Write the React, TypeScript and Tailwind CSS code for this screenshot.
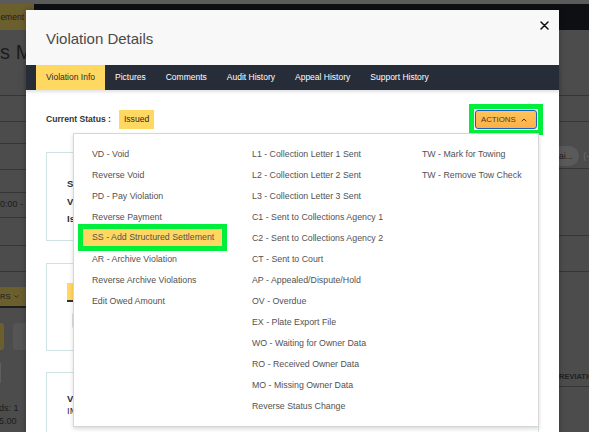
import { ChevronDown, ChevronUp } from 'lucide-react';

const tabs = ['Violation Info', 'Pictures', 'Comments', 'Audit History', 'Appeal History', 'Support History'];

const col1 = [
  'VD - Void',
  'Reverse Void',
  'PD - Pay Violation',
  'Reverse Payment',
  'SS - Add Structured Settlement',
  'AR - Archive Violation',
  'Reverse Archive Violations',
  'Edit Owed Amount',
];

const col2 = [
  'L1 - Collection Letter 1 Sent',
  'L2 - Collection Letter 2 Sent',
  'L3 - Collection Letter 3 Sent',
  'C1 - Sent to Collections Agency 1',
  'C2 - Sent to Collections Agency 2',
  'CT - Sent to Court',
  'AP - Appealed/Dispute/Hold',
  'OV - Overdue',
  'EX - Plate Export File',
  'WO - Waiting for Owner Data',
  'RO - Received Owner Data',
  'MO - Missing Owner Data',
  'Reverse Status Change',
];

const col3 = ['TW - Mark for Towing', 'TW - Remove Tow Check'];

function MenuColumn({ items, highlight }: { items: string[]; highlight?: string }) {
  return (
    <div className="flex flex-col">
      {items.map((item) =>
        item === highlight ? (
          <div key={item} className="h-[21px] flex items-center">
            <div className="w-[139px] h-[17px] -mt-[2px] pl-[9px] flex items-center bg-[#ffd862] outline-[5px] outline-solid outline-[#00ee3c] whitespace-nowrap">
              {item}
            </div>
          </div>
        ) : (
          <div key={item} className="h-[21px] flex items-center px-[9px] whitespace-nowrap">
            {item}
          </div>
        )
      )}
    </div>
  );
}

function Background() {
  return (
    <div className="flex flex-col w-full h-full text-[#1c1c1c]">
      <div className="h-[4px] bg-[#5b5b5b]" />
      <div className="h-[26px] flex">
        <div className="w-[34px] bg-[#6b5f2e] flex items-center justify-end pr-[10px] text-[8.5px] whitespace-nowrap overflow-hidden">
          ement
        </div>
        <div className="flex-1 bg-[#0e0f12]" />
      </div>
      <div className="flex flex-1">
        {/* left strip */}
        <div className="w-[26px] flex flex-col overflow-hidden">
          <div className="h-[66px] border-b border-[#363636] overflow-hidden">
            <div className="mt-[11px] leading-[22px] text-[20px] whitespace-nowrap -ml-[11px]">ns Ma</div>
          </div>
          <div className="h-[26px] border-b border-[#363636]" />
          <div className="h-[22px] border-b border-[#363636]" />
          <div className="h-[26px] border-b border-[#363636]" />
          <div className="h-[23px] border-b border-[#363636]" />
          <div className="h-[25px] border-b border-[#363636] flex items-center text-[9px] whitespace-nowrap">
            0:00 -
          </div>
          <div className="h-[28px] border-b border-[#363636]" />
          <div className="h-[26px] border-b border-[#363636]" />
          <div className="mt-[15px] h-[21px] bg-[#6b5f2e] border-b-2 border-[#1e1e1e] flex items-center gap-[3px] text-[7.5px] whitespace-nowrap">
            RS <ChevronDown size={7} strokeWidth={2.5} />
          </div>
          <div className="mt-[15px] h-[27px] flex">
            <div className="w-[4px] bg-[#6b5f2e] rounded-r-[3px]" />
            <div className="ml-[9px] flex-1 bg-[#555555] rounded-l-[3px]" />
          </div>
          <div className="mt-[13px] h-[20px] w-[1px] bg-[#5e5e5e]" />
          <div className="mt-[19px] text-[9px] leading-[13px] whitespace-nowrap -ml-[1px]">ds: 1</div>
          <div className="text-[9px] leading-[13px] whitespace-nowrap -ml-[1px]">5.00</div>
        </div>
        <div className="flex-1" />
        {/* right strip */}
        <div className="w-[30px] flex flex-col overflow-hidden">
          <div className="h-[66px] border-b border-[#363636]" />
          <div className="h-[26px] border-b border-[#363636]" />
          <div className="h-[47px] border-b border-[#363636] pt-[24px]">
            <div className="flex items-center whitespace-nowrap text-[8.5px]">
              <div className="h-[20px] w-[22px] bg-[#5a5a5a] rounded-r-full flex items-center">ai...</div>
              <span className="ml-[4px] text-[#707070]">(-</span>
            </div>
          </div>
          <div className="h-[67px] border-b border-[#363636]" />
          <div className="h-[36px] border-b border-[#363636]" />
          <div className="h-[115px] border-b border-[#363636] pt-[100px]">
            <div className="text-[7.5px] leading-[10px] font-bold whitespace-nowrap text-[#202020]">REVIATIO</div>
          </div>
        </div>
      </div>
    </div>
  );
}

export default function App() {
  return (
    <div
      className="relative w-[589px] h-[432px] overflow-hidden bg-[#4c4c4c]"
      style={{ fontFamily: '"Liberation Sans", Arial, sans-serif' }}
    >
      <Background />

      {/* modal */}
      <div className="absolute left-[26px] top-[10px] w-[533px] h-[440px] bg-white shadow-[0_0_6px_rgba(0,0,0,0.3)]">
        <div className="h-[55px] bg-[#f8f8f8] flex items-start justify-between px-[20px]">
          <div className="h-[55px] pt-[4px] flex items-center text-[15px] text-[#4a4a4a]">Violation Details</div>
          <svg width={9} height={9} viewBox="0 0 9 9" className="mt-[11px] -mr-[10px]">
            <path d="M1 1 L8 8 M8 1 L1 8" stroke="#111" strokeWidth={1.5} strokeLinecap="round" />
          </svg>
        </div>
        <div className="h-[25px] bg-[#272d38] flex pl-[10px] shadow-[0_2px_3px_rgba(0,0,0,0.12)]">
          {tabs.map((t, i) => (
            <div
              key={t}
              className={`px-[10px] flex items-center text-[8.5px] whitespace-nowrap ${
                i === 0 ? 'bg-[#ffd862] text-[#2b2b2b]' : 'text-white'
              }`}
            >
              {t}
            </div>
          ))}
        </div>

        <div className="px-[20px]">
          <div className="mt-[14px] h-[31px] flex items-center justify-between">
            <div className="flex items-center">
              <span className="text-[8.6px] font-bold text-[#333]">Current Status :</span>
              <span className="ml-[8px] h-[19px] px-[5px] flex items-center bg-[#ffd862] text-[8.6px] text-[#2b2b2b]">
                Issued
              </span>
            </div>
            <div className="-mr-[4px] border-[5px] border-[#00ee3c] p-[1px] bg-[#f2f2f2]">
              <div className="h-[19px] w-[62px] rounded-[3px] border-[1.5px] border-[#1c5fc4] bg-gradient-to-b from-[#ffc458] to-[#fdb04a] flex items-center pl-[5px] gap-[4px] text-[7.8px] text-[#4a3a1e]">
                ACTIONS
                <ChevronUp size={8} strokeWidth={3} />
              </div>
            </div>
          </div>

          {/* cards behind the menu */}
          <div className="mt-[17px] h-[89px] border border-[#cfe3e5] pl-[20px] pt-[22px] text-[9.5px] font-bold text-[#2e2e2e] leading-[17.5px]">
            <div>Status</div>
            <div>Vio</div>
            <div>Iss</div>
          </div>
          <div className="mt-[22px] h-[88px] border border-[#cfe3e5] pl-[20px] pt-[19px]">
            <div className="w-[60px] h-[19px] bg-[#ffd862] border-b-2 border-[#333]" />
            <div className="mt-[10px] ml-[5px] w-[40px] h-[17px] rounded-[3px] border border-[#dcdcdc]" />
          </div>
          <div className="mt-[21px] h-[80px] border border-[#cfe3e5] pl-[20px] pt-[20px] text-[9.5px] leading-[12px] text-[#2e2e2e]">
            <div className="font-bold">Violation</div>
            <div>IMAGE</div>
          </div>
        </div>

        {/* actions dropdown */}
        <div className="absolute left-[47px] top-[123px] w-[466px] h-[294px] bg-white border border-[#d6d6d6] shadow-[0_2px_4px_rgba(0,0,0,0.15)] pl-[9px] pt-[10px] grid grid-cols-[160px_170px_1fr] content-start text-[8.8px] text-[#525252]">
          <MenuColumn items={col1} highlight="SS - Add Structured Settlement" />
          <MenuColumn items={col2} />
          <MenuColumn items={col3} />
        </div>
      </div>
    </div>
  );
}
